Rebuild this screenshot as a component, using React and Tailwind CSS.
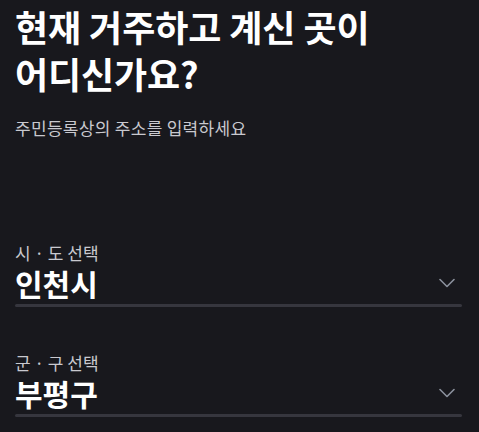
import React from "react";

const font = { fontFamily: '"Noto Sans CJK KR", "Noto Sans", sans-serif' };

const Chevron = () => (
  <svg width="16" height="10" viewBox="0 0 16 10" fill="none">
    <path d="M1 1.5L8 8.5L15 1.5" stroke="#8b919d" strokeWidth="1.6" strokeLinecap="round" strokeLinejoin="round" />
  </svg>
);

const SelectField = ({ label, value }) => (
  <div className="flex flex-col">
    <span className="text-[17px] leading-[24px] text-[#c9c9cf]">{label}</span>
    <div className="flex items-center justify-between pr-[7px]">
      <span className="text-[30px] leading-[36px] font-bold text-white">{value}</span>
      <Chevron />
    </div>
    <div className="mt-[3px] h-[3px] rounded-full bg-[#36363e]" />
  </div>
);

export default function App() {
  return (
    <div className="w-[479px] h-[432px] bg-[#18181d] px-[15px] pt-[3px] overflow-hidden" style={font}>
      <h1 className="text-[36px] leading-[47px] font-bold text-white tracking-[-0.1px]">
        현재 거주하고 계신 곳이
        <br />
        어디신가요?
      </h1>
      <p className="mt-[19px] text-[17px] leading-[24px] text-[#c9c9cf] tracking-[0.3px]">주민등록상의 주소를 입력하세요</p>
      <div className="mt-[101px] flex flex-col gap-[44px] pr-[2px]">
        <SelectField label="시 · 도 선택" value="인천시" />
        <SelectField label="군 · 구 선택" value="부평구" />
      </div>
    </div>
  );
}
